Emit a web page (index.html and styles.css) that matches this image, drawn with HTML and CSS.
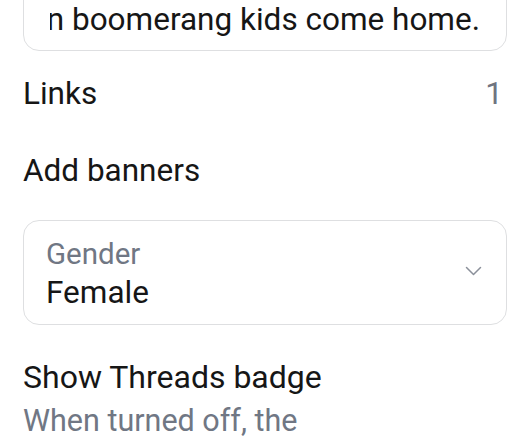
FILE: index.html
```html
<!DOCTYPE html>
<html lang="en">
<head>
  <meta charset="UTF-8" />
  <meta name="viewport" content="width=device-width, initial-scale=1" />
  <title>Edit profile</title>
  <link rel="stylesheet" href="styles.css">
</head>
<body>

  <!-- Bio field (scrolled to the end) -->
  <div class="bio-field">
    <div class="bio-text"><span>Ready for when boomerang kids come home.</span></div>
  </div>

  <!-- Links -->
  <div class="row links-row">
    <span>Links</span>
    <span class="count">1</span>
  </div>

  <div class="row banners-row">
    <span>Add banners</span>
  </div>

  <!-- Gender select -->
  <div class="select-field">
    <div class="select-values">
      <div class="select-label">Gender</div>
      <div class="select-value">Female</div>
    </div>
    <svg class="chevron" width="17" height="10" viewBox="0 0 17 10">
      <polyline points="1.5,1.5 8.5,8.5 15.5,1.5" fill="none" stroke="#8b909a" stroke-width="1.5" stroke-linecap="round" stroke-linejoin="round" />
    </svg>
  </div>

  <!-- Threads badge -->
  <div class="badge-title">Show Threads badge</div>
  <div class="badge-desc">When turned off, the</div>

</body>
</html>
```

FILE: styles.css
```css
body {
  font-family: Roboto, "Noto Sans", sans-serif;
  margin: 0;
  padding: 0 23px;
  background-color: white;
  color: #161616;
  overflow: hidden;
}

.bio-field {
  box-sizing: border-box;
  margin-top: -30px;
  height: 81px;
  border: 1.5px solid #dedfe1;
  border-radius: 16px;
  padding: 0 26px 11.7px 26px;
  display: flex;
  align-items: flex-end;
}

.bio-text {
  flex: 1;
  overflow: hidden;
  white-space: nowrap;
  display: flex;
  justify-content: flex-end;
  font-size: 31.5px;
  line-height: 37px;
}

.row {
  display: flex;
  justify-content: space-between;
  font-size: 31.5px;
  line-height: 37px;
}

.links-row {
  margin-top: 24px;
}

.count {
  color: #6f7480;
  padding-right: 4px;
}

.banners-row {
  margin-top: 40px;
}

.select-field {
  box-sizing: border-box;
  margin-top: 30.5px;
  height: 105.5px;
  border: 1.5px solid #dedfe1;
  border-radius: 16px;
  padding: 16.4px 24.5px 12.7px 22px;
  display: flex;
  align-items: center;
  justify-content: space-between;
}

.select-label {
  font-size: 29.5px;
  line-height: 35px;
  color: #707784;
}

.select-value {
  margin-top: 1.4px;
  font-size: 31.5px;
  line-height: 37px;
}

.chevron {
  margin-bottom: 6px;
}

.badge-title {
  margin-top: 33.8px;
  font-size: 32px;
  line-height: 37px;
}

.badge-desc {
  margin-top: 6.8px;
  font-size: 30.5px;
  line-height: 36px;
  color: #707784;
}
```
